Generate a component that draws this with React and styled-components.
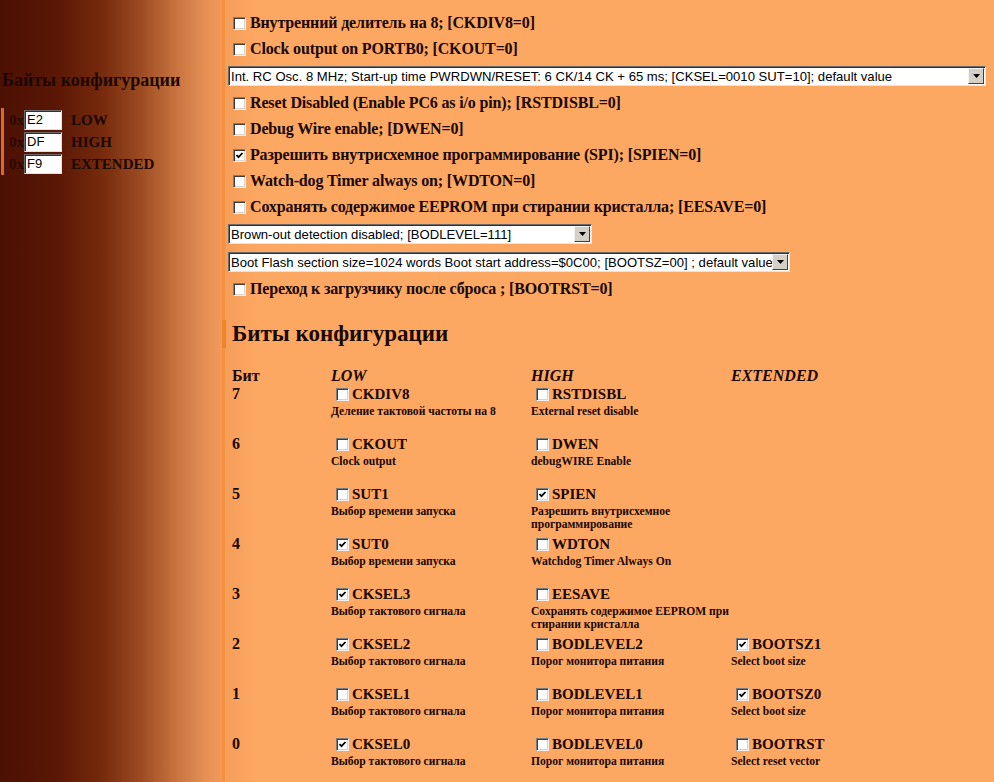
import React from "react";
import styled, { createGlobalStyle } from "styled-components";

const GlobalStyle = createGlobalStyle`
  html, body {
    margin: 0;
    padding: 0;
  }
  body {
    font-family: "Liberation Serif", "Times New Roman", serif;
    color: #1a0800;
    overflow: hidden;
    background: linear-gradient(
      90deg,
      #4c1003 0px,
      #5a1705 55px,
      #74290c 100px,
      #9b4a21 140px,
      #c7723e 175px,
      #e58f55 205px,
      #f19a58 222px
    );
  }
`;

const Page = styled.div`
  display: flex;
  min-height: 782px;
`;

const Sidebar = styled.div`
  width: 222px;
  flex-shrink: 0;
  padding-top: 70px;
  box-sizing: border-box;
`;

const SideTitle = styled.div`
  font-size: 18px;
  font-weight: bold;
  line-height: 21px;
  padding-left: 2px;
  white-space: nowrap;
`;

const FuseBlock = styled.div`
  margin: 17px 0 0 1px;
  border-left: 3px solid #d9692c;
  padding: 1px 0 0 5px;
  display: flex;
  flex-direction: column;
`;

const FuseRow = styled.div`
  display: flex;
  align-items: center;
  height: 22px;
  font-size: 15px;
  font-weight: bold;
`;

const Prefix = styled.span`
  color: #2a0a02;
`;

const HexBox = styled.div`
  width: 38px;
  height: 20px;
  box-sizing: border-box;
  background: #fff;
  border: 1px solid;
  border-color: #6a6a6a #e0e0e0 #e0e0e0 #6a6a6a;
  box-shadow: inset 1px 1px 0 #303030;
  font-family: "Liberation Sans", Arial, sans-serif;
  font-size: 13px;
  font-weight: normal;
  line-height: 18px;
  padding-left: 2px;
  color: #000;
`;

const FuseName = styled.span`
  margin-left: 9px;
`;

const Main = styled.div`
  flex: 1;
  background: linear-gradient(90deg, #f59e5a 0px, #fca762 30px, #fda862 100%);
  border-left: 3px solid #f3913e;
  padding: 10px 8px 0 3px;
  box-sizing: border-box;
`;

const OptionRow = styled.div`
  display: flex;
  align-items: center;
  height: 26px;
  padding-left: 5px;
  font-size: 16px;
  font-weight: bold;
  letter-spacing: -0.15px;
  white-space: nowrap;
`;

const OptionText = styled.span`
  margin-left: 4px;
`;

const SelectRow = styled.div`
  height: 28px;
  display: flex;
  align-items: center;
`;

const FakeSelect = styled.div`
  width: ${(p) => p.$width};
  height: 20px;
  box-sizing: border-box;
  background: #fff;
  border: 1px solid;
  border-color: #6a6a6a #e4e4e4 #e4e4e4 #6a6a6a;
  box-shadow: inset 1px 1px 0 #303030;
  display: flex;
  align-items: center;
  font-family: "Liberation Sans", Arial, sans-serif;
  font-size: 13.1px;
  color: #000;
  overflow: hidden;
`;

const SelectText = styled.span`
  flex: 1;
  padding-left: 2px;
  white-space: nowrap;
  overflow: hidden;
`;

const DropButton = styled.span`
  width: 16px;
  height: 16px;
  margin-right: 1px;
  box-sizing: border-box;
  background: #d4d0c8;
  border: 1px solid;
  border-color: #f4f4f4 #404040 #404040 #f4f4f4;
  display: flex;
  align-items: center;
  justify-content: center;
  flex-shrink: 0;
`;

const Heading = styled.h2`
  margin: 18px 0 0 -6px;
  border-left: 4px solid #f0842a;
  padding-left: 6px;
  font-size: 23px;
  line-height: 28px;
  font-weight: bold;
`;

const BitGrid = styled.div`
  margin: 19px 0 0 4px;
  display: grid;
  grid-template-columns: 99px 200px 200px 200px;
  grid-template-rows: 18px;
  grid-auto-rows: 50px;
  align-items: start;
`;

const HeadCell = styled.div`
  font-size: 16px;
  font-weight: bold;
  font-style: ${(p) => (p.$italic ? "italic" : "normal")};
  line-height: 18px;
`;

const BitNum = styled.div`
  font-size: 16px;
  font-weight: bold;
  line-height: 18px;
`;

const FuseCell = styled.div`
  display: flex;
  flex-direction: column;
`;

const FuseTitle = styled.div`
  display: flex;
  align-items: center;
  height: 18px;
  padding-left: 5px;
  font-size: 15px;
  font-weight: bold;
`;

const FuseDesc = styled.div`
  margin-top: 2px;
  font-size: 11.6px;
  font-weight: bold;
  line-height: 13px;
  width: 212px;
`;

const Box = styled.span`
  width: 13px;
  height: 13px;
  box-sizing: border-box;
  flex-shrink: 0;
  background: #fff;
  border: 1px solid;
  border-color: #7c7c7c #f0f0f0 #f0f0f0 #7c7c7c;
  box-shadow: inset 1px 1px 0 #3c3c3c, inset -1px -1px 0 #d8d4cc;
  display: inline-flex;
  align-items: center;
  justify-content: center;
  margin-right: ${(p) => p.$gap || "0"};
`;

function Check({ checked, gap }) {
  return (
    <Box $gap={gap}>
      {checked && (
        <svg width="9" height="9" viewBox="0 0 9 9">
          <path d="M1.5 4 L3.5 6.2 L7.5 2" fill="none" stroke="#000" strokeWidth="1.8" />
        </svg>
      )}
    </Box>
  );
}

function Select({ width, text }) {
  return (
    <SelectRow>
      <FakeSelect $width={width}>
        <SelectText>{text}</SelectText>
        <DropButton>
          <svg width="7" height="4" viewBox="0 0 7 4">
            <path d="M0 0 H7 L3.5 4 Z" fill="#000" />
          </svg>
        </DropButton>
      </FakeSelect>
    </SelectRow>
  );
}

function Option({ checked, text }) {
  return (
    <OptionRow>
      <Check checked={checked} />
      <OptionText>{text}</OptionText>
    </OptionRow>
  );
}

const fuses = [
  { prefix: "0x", value: "E2", name: "LOW" },
  { prefix: "0x", value: "DF", name: "HIGH" },
  { prefix: "0x", value: "F9", name: "EXTENDED" },
];

const bits = [
  {
    n: 7,
    low: { name: "CKDIV8", desc: "Деление тактовой частоты на 8" },
    high: { name: "RSTDISBL", desc: "External reset disable" },
  },
  {
    n: 6,
    low: { name: "CKOUT", desc: "Clock output" },
    high: { name: "DWEN", desc: "debugWIRE Enable" },
  },
  {
    n: 5,
    low: { name: "SUT1", desc: "Выбор времени запуска" },
    high: { name: "SPIEN", desc: "Разрешить внутрисхемное программирование", checked: true },
  },
  {
    n: 4,
    low: { name: "SUT0", desc: "Выбор времени запуска", checked: true },
    high: { name: "WDTON", desc: "Watchdog Timer Always On" },
  },
  {
    n: 3,
    low: { name: "CKSEL3", desc: "Выбор тактового сигнала", checked: true },
    high: { name: "EESAVE", desc: "Сохранять содержимое EEPROM при стирании кристалла" },
  },
  {
    n: 2,
    low: { name: "CKSEL2", desc: "Выбор тактового сигнала", checked: true },
    high: { name: "BODLEVEL2", desc: "Порог монитора питания" },
    ext: { name: "BOOTSZ1", desc: "Select boot size", checked: true },
  },
  {
    n: 1,
    low: { name: "CKSEL1", desc: "Выбор тактового сигнала" },
    high: { name: "BODLEVEL1", desc: "Порог монитора питания" },
    ext: { name: "BOOTSZ0", desc: "Select boot size", checked: true },
  },
  {
    n: 0,
    low: { name: "CKSEL0", desc: "Выбор тактового сигнала", checked: true },
    high: { name: "BODLEVEL0", desc: "Порог монитора питания" },
    ext: { name: "BOOTRST", desc: "Select reset vector" },
  },
];

function Fuse({ bit }) {
  if (!bit) return <div />;
  return (
    <FuseCell>
      <FuseTitle>
        <Check checked={bit.checked} gap="3px" />
        {bit.name}
      </FuseTitle>
      <FuseDesc>{bit.desc}</FuseDesc>
    </FuseCell>
  );
}

export default function App() {
  return (
    <Page>
      <GlobalStyle />
      <Sidebar>
        <SideTitle>Байты конфигурации</SideTitle>
        <FuseBlock>
          {fuses.map((f) => (
            <FuseRow key={f.name}>
              <Prefix>{f.prefix}</Prefix>
              <HexBox>{f.value}</HexBox>
              <FuseName>{f.name}</FuseName>
            </FuseRow>
          ))}
        </FuseBlock>
      </Sidebar>
      <Main>
        <Option text="Внутренний делитель на 8; [CKDIV8=0]" />
        <Option text="Clock output on PORTB0; [CKOUT=0]" />
        <Select
          width="100%"
          text="Int. RC Osc. 8 MHz; Start-up time PWRDWN/RESET: 6 CK/14 CK + 65 ms; [CKSEL=0010 SUT=10]; default value"
        />
        <Option text="Reset Disabled (Enable PC6 as i/o pin); [RSTDISBL=0]" />
        <Option text="Debug Wire enable; [DWEN=0]" />
        <Option checked text="Разрешить внутрисхемное программирование (SPI); [SPIEN=0]" />
        <Option text="Watch-dog Timer always on; [WDTON=0]" />
        <Option text="Сохранять содержимое EEPROM при стирании кристалла; [EESAVE=0]" />
        <Select width="364px" text="Brown-out detection disabled; [BODLEVEL=111]" />
        <Select
          width="562px"
          text="Boot Flash section size=1024 words Boot start address=$0C00; [BOOTSZ=00] ; default value"
        />
        <Option text="Переход к загрузчику после сброса ; [BOOTRST=0]" />

        <Heading>Биты конфигурации</Heading>

        <BitGrid>
          <HeadCell>Бит</HeadCell>
          <HeadCell $italic>LOW</HeadCell>
          <HeadCell $italic>HIGH</HeadCell>
          <HeadCell $italic>EXTENDED</HeadCell>
          {bits.map((b) => (
            <React.Fragment key={b.n}>
              <BitNum>{b.n}</BitNum>
              <Fuse bit={b.low} />
              <Fuse bit={b.high} />
              <Fuse bit={b.ext} />
            </React.Fragment>
          ))}
        </BitGrid>
      </Main>
    </Page>
  );
}
